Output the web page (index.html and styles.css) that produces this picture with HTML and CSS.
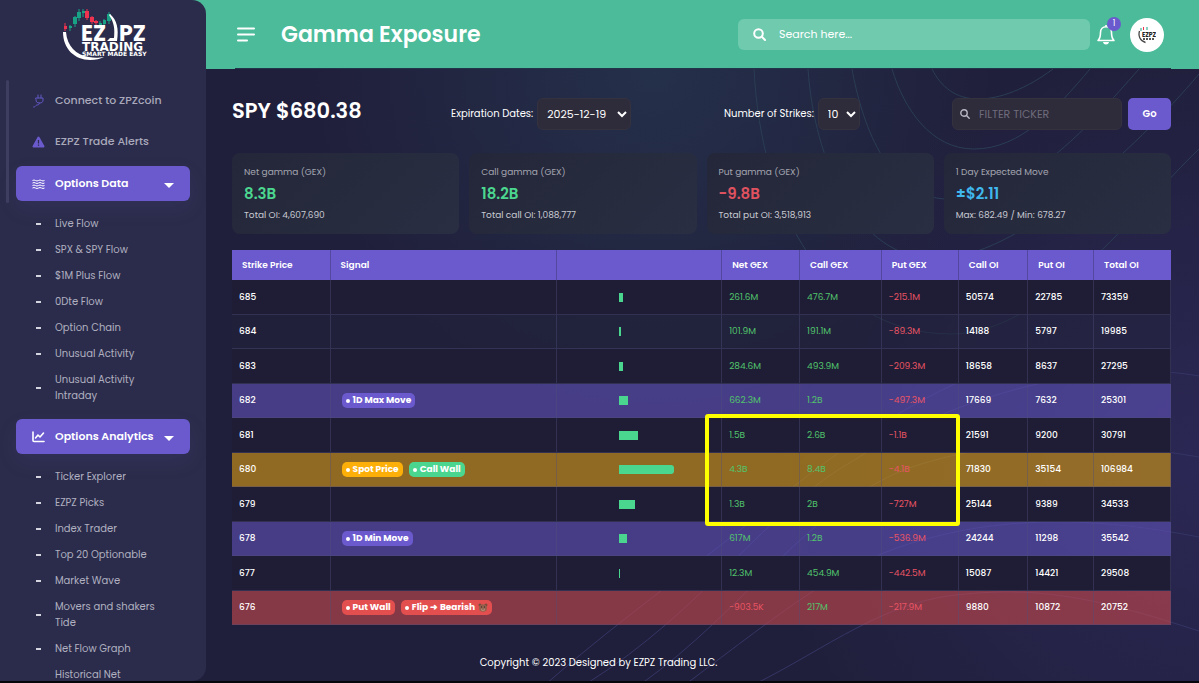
FILE: index.html
```html
<!DOCTYPE html>
<html lang="en">
<head>
    <meta charset="UTF-8">
    <meta name="viewport" content="width=device-width, initial-scale=1.0">
    <title>Gamma Exposure</title>
    <link rel="stylesheet" href="styles.css">
</head>
<body>
    <div class="app">
        <!-- Sidebar -->
        <aside class="sidebar">
            <a href="#" class="logo">
                <svg width="90" height="56" viewBox="0 0 90 56">
                    <g stroke="#19a186" fill="#19a186">
                        <path d="M9 19v6M14 10v11M18 3v12M22 3v8M39 15v7M43 13v7M48 6v12"/>
                        <path stroke="none" d="M8 20h3v2h-3zM12 11h4v7h-4zM16 6h4v6h-4zM21 5h3v2h-3zM38 17h3v2h-3zM42 14h3v4h-3zM46 8h4v7h-4z"/>
                    </g>
                    <g stroke="#ee3350" fill="#ee3350">
                        <path d="M4 17v8M26 3v11M31 10v8M35 14v5"/>
                        <path stroke="none" d="M3 20h3v3h-3zM24 5h4v7h-4zM29 11h4v5h-4zM33 15h4v2h-4z"/>
                    </g>
                    <path fill="#fff" d="M2 26C2 43 14 54 29 54c6 0 10-1 14-3-6 1-10 1-15 0C15 49 6 40 5 26zM49 8c7 6 9 15 7 27h-10l3-3h4c1-9 0-16-5-23z"/>
                    <g fill="#fff">
                        <text x="20" y="35" font-size="22" class="logo-name">EZ</text>
                        <text x="58" y="35" font-size="22" class="logo-name">PZ</text>
                        <text x="21" y="45" font-size="12" class="logo-sub">TRADING</text>
                        <text x="21" y="50" font-size="6" class="logo-sub">SMART MADE EASY</text>
                    </g>
                </svg>
            </a>
            <nav class="menu">
                <a href="#" class="menu-link">
                    <svg width="13" height="14" viewBox="0 0 13 14" fill="none" stroke="#6258c4" stroke-linecap="round"><path d="M6 1v3M9 1v3M4 4h7v2c0 2-1 3-3.500 3S4 8 4 6zM7.500 9c0 3-3 1-4 3-.5 1-1.500 1-2 1"/></svg>
                    Connect to ZPZcoin
                </a>
                <a href="#" class="menu-link">
                    <svg width="13" height="12" viewBox="0 0 13 12"><path fill="#6a5acd" d="M6.500.5c.4 0 .7.2.9.6l5 9c.3.600-.1 1.400-.9 1.400h-10c-.8 0-1.200-.8-.9-1.400l5-9c.2-.4.5-.6.9-.6z"/><path stroke="#2b2c4b" stroke-width="1.200" d="M6.500 4v3.500M6.500 8.500v1.300"/></svg>
                    EZPZ Trade Alerts
                </a>
                <button type="button" class="menu-button">
                    <svg width="13" height="10" viewBox="0 0 13 10" fill="none" stroke="#fff" stroke-width="1"><path d="M.5 1.500q1.500-1 3 0t3 0 3 0 3 0M.5 4q1.500-1 3 0t3 0 3 0 3 0M.5 6.500q1.500-1 3 0t3 0 3 0 3 0M.5 9q1.500-1 3 0t3 0 3 0 3 0"/></svg>
                    Options Data
                    <span class="caret"></span>
                </button>
                <ul class="submenu">
                    <li><a href="#">Live Flow</a></li>
                    <li><a href="#">SPX &amp; SPY Flow</a></li>
                    <li><a href="#">$1M Plus Flow</a></li>
                    <li><a href="#">0Dte Flow</a></li>
                    <li><a href="#">Option Chain</a></li>
                    <li><a href="#">Unusual Activity</a></li>
                    <li><a href="#">Unusual Activity Intraday</a></li>
                </ul>
                <button type="button" class="menu-button">
                    <svg width="13" height="12" viewBox="0 0 13 12" fill="none" stroke="#fff" stroke-width="1.600" stroke-linecap="round" stroke-linejoin="round"><path d="M1 1v8.500c0 .8.300 1 1 1h10M3.500 7l2.500-3 2 2 3.500-4"/></svg>
                    Options Analytics
                    <span class="caret"></span>
                </button>
                <ul class="submenu">
                    <li><a href="#">Ticker Explorer</a></li>
                    <li><a href="#">EZPZ Picks</a></li>
                    <li><a href="#">Index Trader</a></li>
                    <li><a href="#">Top 20 Optionable</a></li>
                    <li><a href="#">Market Wave</a></li>
                    <li><a href="#">Movers and shakers Tide</a></li>
                    <li><a href="#">Net Flow Graph</a></li>
                    <li class="no-dash"><a href="#">Historical Net</a></li>
                </ul>
            </nav>
            <span class="scroll-thumb"></span>
        </aside>

        <div class="page">
            <!-- Top bar -->
            <header class="topbar">
                <button type="button" class="icon-button" aria-label="Toggle menu">
                    <svg width="18" height="15" viewBox="0 0 18 15" stroke="#fff" stroke-width="2" stroke-linecap="round"><path d="M1 1.500h16M1 7.500h16M1 13.500h9"/></svg>
                </button>
                <h1>Gamma Exposure</h1>
                <label class="search">
                    <svg width="13" height="13" viewBox="0 0 13 13" fill="none" stroke="#fff" stroke-width="2" stroke-linecap="round"><circle cx="5.500" cy="5.500" r="4.300"/><path d="M8.800 8.800L12 12"/></svg>
                    <input type="text" placeholder="Search here..." aria-label="Search here">
                </label>
                <button type="button" class="icon-button bell" aria-label="Notifications">
                    <svg width="20" height="21" viewBox="0 0 20 21" fill="none" stroke="#fff" stroke-width="1.600" stroke-linejoin="round"><path d="M10 1v1.500M2 16.500c2-2 2.500-4 2.500-8C4.500 5 7 2.700 10 2.700s5.500 2.300 5.500 5.800c0 4 .5 6 2.500 8z"/><path fill="#fff" stroke="none" d="M7 18h6c-.3 1.700-1.500 2.500-3 2.500S7.300 19.700 7 18z"/></svg>
                    <span class="badge">1</span>
                </button>
                <a href="#" class="avatar" aria-label="Profile">
                    <svg width="18" height="18" viewBox="0 0 18 18">
                        <path fill="none" stroke="#444" stroke-width="1.300" d="M1.500 5C0 10 2 15 7.500 16.500"/>
                        <path stroke="#19a186" d="M3 2v3M9 1v3"/><path stroke="#ee3350" d="M5.500 1v3"/>
                        <path stroke="#555" stroke-width="2" stroke-dasharray="2 1" d="M5 13h12"/>
                        <text x="4" y="11" font-size="6" fill="#222" class="logo-name">EZPZ</text>
                    </svg>
                </a>
            </header>

            <main class="content">
                <svg class="waves" viewBox="0 0 993 615" preserveAspectRatio="xMaxYMin slice" fill="none">
                    <g stroke="#2a3d53" stroke-width="1">
                        <path d="M726 0C735 18 750 30 772 30S820 20 847 0"/>
                        <path d="M686 0C698 40 725 80 768 80C815 80 850 40 884 0"/>
                        <path d="M646 0C655 50 680 130 742 130C820 130 880 60 933 0"/>
                        <path d="M602 0C608 90 650 190 730 190C810 190 930 80 993 5"/>
                        <path d="M548 0C555 140 620 265 745 265C840 265 930 140 993 80"/>
                    </g>
                    <g stroke="#343565" stroke-width="1">
                        <path d="M340 615C420 545 500 490 560 440S690 340 760 310"/>
                        <path d="M380 615C500 540 560 440 650 390C760 320 900 290 993 307"/>
                        <path d="M435 615C540 540 600 440 700 400C800 365 900 372 993 388"/>
                        <path d="M480 615C580 540 640 490 720 470C810 445 900 450 993 468"/>
                        <path d="M549 615C620 580 680 530 760 525C840 517 900 532 993 562"/>
                    </g>
                </svg>

                <!-- Filters -->
                <form class="filters">
                    <h2>SPY $680.38</h2>
                    <div class="field">
                        <label for="expiration">Expiration Dates:</label>
                        <select id="expiration" class="select-date"><option>2025-12-19</option></select>
                    </div>
                    <div class="field">
                        <label for="strikes">Number of Strikes:</label>
                        <select id="strikes" class="select-count"><option>10</option></select>
                    </div>
                    <div class="ticker">
                        <label class="ticker-box">
                            <svg width="10" height="10" viewBox="0 0 10 10" fill="none" stroke="#b9b8c4" stroke-width="1.400" stroke-linecap="round"><circle cx="4" cy="4" r="3.200"/><path d="M6.500 6.500L9.200 9.200"/></svg>
                            <input type="text" placeholder="FILTER TICKER" aria-label="Filter ticker">
                        </label>
                        <button type="button" class="go">Go</button>
                    </div>
                </form>

                <!-- Summary cards -->
                <section class="cards">
                    <div class="card">
                        <span class="card-label">Net gamma (GEX)</span>
                        <strong class="green">8.3B</strong>
                        <span>Total OI: 4,607,690</span>
                    </div>
                    <div class="card">
                        <span class="card-label">Call gamma (GEX)</span>
                        <strong class="green">18.2B</strong>
                        <span>Total call OI: 1,088,777</span>
                    </div>
                    <div class="card">
                        <span class="card-label">Put gamma (GEX)</span>
                        <strong class="red">-9.8B</strong>
                        <span>Total put OI: 3,518,913</span>
                    </div>
                    <div class="card">
                        <span class="card-label">1 Day Expected Move</span>
                        <strong class="blue">±$2.11</strong>
                        <span>Max: 682.49 / Min: 678.27</span>
                    </div>
                </section>

                <!-- Strikes table -->
                <div class="table-wrap">
                    <table class="gex">
                        <colgroup>
                            <col class="col-strike"><col class="col-signal"><col class="col-bar">
                            <col class="col-net"><col class="col-call"><col class="col-put">
                            <col class="col-call-oi"><col class="col-put-oi"><col class="col-total">
                        </colgroup>
                        <thead>
                            <tr><th>Strike Price</th><th>Signal</th><th></th><th>Net GEX</th><th>Call GEX</th><th>Put GEX</th><th>Call OI</th><th>Put OI</th><th>Total OI</th></tr>
                        </thead>
                        <tbody>
                            <tr>
                                <td>685</td><td></td><td><div class="bar" style="width: 4px"></div></td>
                                <td class="up">261.6M</td><td class="up">476.7M</td><td class="down">-215.1M</td>
                                <td>50574</td><td>22785</td><td>73359</td>
                            </tr>
                            <tr>
                                <td>684</td><td></td><td><div class="bar" style="width: 2px"></div></td>
                                <td class="up">101.9M</td><td class="up">191.1M</td><td class="down">-89.3M</td>
                                <td>14188</td><td>5797</td><td>19985</td>
                            </tr>
                            <tr>
                                <td>683</td><td></td><td><div class="bar" style="width: 4px"></div></td>
                                <td class="up">284.6M</td><td class="up">493.9M</td><td class="down">-209.3M</td>
                                <td>18658</td><td>8637</td><td>27295</td>
                            </tr>
                            <tr class="row-move">
                                <td>682</td><td><span class="tag tag-purple">1D Max Move</span></td><td><div class="bar" style="width: 9px"></div></td>
                                <td class="up">662.3M</td><td class="up">1.2B</td><td class="down">-497.3M</td>
                                <td>17669</td><td>7632</td><td>25301</td>
                            </tr>
                            <tr>
                                <td>681</td><td></td><td><div class="bar" style="width: 19px"></div></td>
                                <td class="up">1.5B</td><td class="up">2.6B</td><td class="down">-1.1B</td>
                                <td>21591</td><td>9200</td><td>30791</td>
                            </tr>
                            <tr class="row-spot">
                                <td>680</td><td><span class="tag tag-gold">Spot Price</span><span class="tag tag-green">Call Wall</span></td><td><div class="bar bar-max" style="width: 55px"></div></td>
                                <td class="up">4.3B</td><td class="up">8.4B</td><td class="down">-4.1B</td>
                                <td>71830</td><td>35154</td><td>106984</td>
                            </tr>
                            <tr>
                                <td>679</td><td></td><td><div class="bar" style="width: 16px"></div></td>
                                <td class="up">1.3B</td><td class="up">2B</td><td class="down">-727M</td>
                                <td>25144</td><td>9389</td><td>34533</td>
                            </tr>
                            <tr class="row-move">
                                <td>678</td><td><span class="tag tag-purple">1D Min Move</span></td><td><div class="bar" style="width: 8px"></div></td>
                                <td class="up">617M</td><td class="up">1.2B</td><td class="down">-536.9M</td>
                                <td>24244</td><td>11298</td><td>35542</td>
                            </tr>
                            <tr>
                                <td>677</td><td></td><td><div class="bar" style="width: 1px"></div></td>
                                <td class="up">12.3M</td><td class="up">454.9M</td><td class="down">-442.5M</td>
                                <td>15087</td><td>14421</td><td>29508</td>
                            </tr>
                            <tr class="row-put">
                                <td>676</td>
                                <td><span class="tag tag-red">Put Wall</span><span class="tag tag-red">Flip ➜ Bearish
                                    <svg width="10" height="9" viewBox="0 0 10 9"><circle cx="2" cy="2" r="1.500" fill="#7a4a3c"/><circle cx="8" cy="2" r="1.500" fill="#7a4a3c"/><ellipse cx="5" cy="5" rx="4" ry="3.800" fill="#94604c"/><ellipse cx="5" cy="6.500" rx="2" ry="1.600" fill="#b98a72"/><path d="M3 4h1M6 4h1M4.500 6h1" stroke="#33232a"/></svg></span></td>
                                <td></td>
                                <td class="down">-903.5K</td><td class="up">217M</td><td class="down">-217.9M</td>
                                <td>9880</td><td>10872</td><td>20752</td>
                            </tr>
                        </tbody>
                    </table>
                    <div class="highlight"></div>
                </div>

                <footer>Copyright © 2023 Designed by EZPZ Trading LLC.</footer>
            </main>
        </div>
    </div>
</body>
</html>
```
FILE: styles.css
```css
* {
    box-sizing: border-box;
}
body {
    margin: 0;
    background: #05050c;
    color: #fff;
    font-family: Poppins, Inter, "Open Sans", sans-serif;
    font-size: 10px;
}
button, input, select {
    font-family: inherit;
    color: #fff;
    border: none;
}
a {
    color: inherit;
    text-decoration: none;
}
svg {
    flex-shrink: 0;
}
.app {
    display: flex;
    height: 100vh;
    overflow: hidden;
    border-bottom: 2px solid #05050c;
    background: #201f3b;
}

/* Sidebar */
.sidebar {
    position: relative;
    z-index: 2;
    flex: 0 0 206px;
    padding: 6px 16px 0;
    overflow: hidden;
    background: #2b2c4b;
    border-radius: 0 14px 14px 0;
}
.logo {
    display: block;
    height: 74px;
    padding-left: 45px;
}
.logo-name {
    font-weight: 700;
}
.logo-sub {
    font-family: "DejaVu Sans", sans-serif;
    font-weight: 700;
}
.scroll-thumb {
    position: absolute;
    top: 80px;
    left: 6px;
    width: 3px;
    height: 123px;
    border-radius: 2px;
    background: #3e3f60;
}
.menu-link, .menu-button {
    display: flex;
    align-items: center;
    gap: 10px;
    padding: 0 16px;
    font-size: 11px;
    font-weight: 500;
}
.menu-link {
    height: 41px;
    color: #a9a9bb;
}
.menu-link:nth-child(2) {
    margin-bottom: 4px;
}
.menu-button {
    width: 100%;
    height: 35px;
    border-radius: 6px;
    background: #6a5acd;
    font-weight: 600;
    box-shadow: 0 8px 20px rgba(106, 90, 205, 0.1);
}
.caret {
    margin-left: auto;
    margin-top: 4px;
    border: 5px solid transparent;
    border-top: 5px solid #fff;
    border-bottom: 0;
}
.submenu {
    margin: 0 0 10px;
    padding: 10px 0 0;
    list-style: none;
}
.submenu li {
    display: flex;
    align-items: center;
    gap: 14px;
    padding: 5px 20px;
    color: #b0b0c0;
    line-height: 16px;
}
.submenu li::before {
    content: "";
    flex: 0 0 5px;
    height: 2px;
    background: #d5d5e0;
}
.submenu .no-dash::before {
    background: none;
}

/* Top bar */
.page {
    flex: 1;
    min-width: 0;
    display: flex;
    flex-direction: column;
}
.topbar {
    position: relative;
    display: flex;
    align-items: center;
    flex-shrink: 0;
    height: 69px;
    margin-left: -20px;
    padding: 0 35px 0 51px;
    background: #4bbb99;
}
.topbar::after {
    content: "";
    position: absolute;
    left: 49px;
    right: 28px;
    bottom: 0;
    height: 1px;
    background: #22344a;
}
.topbar h1 {
    margin: 0 auto 0 26px;
    font-size: 22px;
    font-weight: 600;
}
.icon-button {
    padding: 0;
    background: none;
    line-height: 0;
}
.search {
    display: flex;
    align-items: center;
    flex: 0 1 352px;
    height: 31px;
    padding: 0 15px;
    gap: 13px;
    border-radius: 6px;
    background: #70caae;
}
.search input {
    flex: 1;
    min-width: 0;
    padding: 0;
    background: none;
    font-size: 11px;
}
.search input::placeholder {
    color: #fff;
}
.bell {
    position: relative;
    margin: 0 14px 0 6px;
}
.badge {
    position: absolute;
    top: -7px;
    right: -5px;
    width: 14px;
    height: 14px;
    border-radius: 50%;
    background: #6a5acd;
    font-size: 8px;
    line-height: 14px;
}
.avatar {
    display: flex;
    align-items: center;
    justify-content: center;
    flex: 0 0 34px;
    height: 34px;
    border-radius: 50%;
    background: #fff;
}

/* Content */
.content {
    position: relative;
    flex: 1;
    padding: 29px 28px 0 26px;
    background:
        radial-gradient(circle at 45% 0, rgba(42, 68, 92, 0.45), rgba(42, 68, 92, 0) 42%),
        radial-gradient(circle at 100% 65%, rgba(48, 43, 96, 0.7), rgba(48, 43, 96, 0) 40%),
        #201f3b;
}
.waves {
    position: absolute;
    top: 0;
    left: 0;
    width: 100%;
    height: 100%;
}
.filters, .cards, .table-wrap, footer {
    position: relative;
}
.filters {
    display: grid;
    grid-template-columns: 219fr 273fr 228fr 219fr;
    align-items: center;
}
.filters h2 {
    margin: 0 0 6px;
    font-size: 21px;
    line-height: 26px;
    font-weight: 600;
}
.field {
    display: flex;
    align-items: center;
    gap: 4px;
    white-space: nowrap;
}
.field select, .ticker-box {
    height: 32px;
    border: 1px solid #35323f;
    border-radius: 6px;
    background: #2e2b3b;
}
.field select {
    padding-left: 5px;
    font-size: 11px;
}
.select-date {
    width: 94px;
}
.select-count {
    width: 42px;
}
.ticker {
    display: flex;
    gap: 6px;
}
.ticker-box {
    flex: 1;
    display: flex;
    align-items: center;
    gap: 9px;
    padding: 0 7px;
}
.ticker-box input {
    width: 100%;
    min-width: 0;
    padding: 0;
    background: none;
    font-size: 11px;
}
.ticker-box input::placeholder {
    color: #6e6c7b;
}
.go {
    width: 43px;
    border-radius: 5px;
    background: #6a5acd;
    font-size: 10px;
    font-weight: 600;
}
.cards {
    display: grid;
    grid-template-columns: repeat(4, 1fr);
    gap: 10px;
    margin-top: 23px;
}
.card {
    display: flex;
    flex-direction: column;
    padding: 11px 12px;
    border-radius: 8px;
    background: linear-gradient(135deg, #242739, #292e42);
    color: #c8c9d2;
    font-size: 9px;
    line-height: 16px;
}
.card-label {
    color: #a4a5b1;
}
.card strong {
    font-size: 15px;
    line-height: 27px;
    font-weight: 600;
}
.green {
    color: #4cd790;
}
.red {
    color: #e05260;
}
.blue {
    color: #40b8ee;
}

/* Table */
.table-wrap {
    margin-top: 16px;
}
.gex {
    width: 100%;
    table-layout: fixed;
    border-collapse: separate;
    border-spacing: 0;
    font-size: 9px;
    font-weight: 500;
}
.col-strike { width: 10.5%; }
.col-signal { width: 24.1%; }
.col-bar { width: 17.6%; }
.col-net { width: 8.3%; }
.col-call { width: 8.7%; }
.col-put { width: 8.2%; }
.col-call-oi { width: 7.4%; }
.col-put-oi { width: 7%; }
.col-total { width: 8.2%; }
.gex th {
    height: 30px;
    padding: 0 10px;
    background: #6a5acd;
    border-right: 1px solid #5348a0;
    font-weight: 600;
    text-align: left;
}
.gex td {
    height: 35px;
    padding: 0 0 0 7px;
    border-right: 1px solid rgba(80, 80, 125, 0.4);
    border-bottom: 1px solid rgba(80, 80, 125, 0.4);
}
.gex tr:nth-child(even) td {
    height: 34px;
}
.gex th:last-child {
    border-right: none;
}
.gex td:nth-child(2) {
    padding-left: 11px;
}
.gex tbody tr {
    background: rgba(33, 33, 58, 0.5);
}
.gex tbody tr:nth-child(odd) {
    background: #1e1d35;
}
.gex tbody .row-move {
    background: rgba(93, 81, 181, 0.62);
}
.gex tbody .row-spot {
    background: rgba(202, 146, 22, 0.66);
}
.gex tbody .row-put {
    background: rgba(202, 74, 76, 0.6);
}
.gex .up {
    color: #52c46c;
    font-weight: 400;
}
.gex .down {
    color: #e95464;
    font-weight: 400;
}
.bar {
    height: 9px;
    margin-left: 35%;
    background: #4bd68f;
}
.bar-max {
    border-radius: 0 3px 3px 0;
}
.tag {
    display: inline-flex;
    align-items: center;
    gap: 3px;
    height: 15px;
    margin-right: 6px;
    padding: 0 4px;
    border-radius: 5px;
    font-weight: 700;
}
.tag::before {
    content: "";
    width: 4px;
    height: 4px;
    border-radius: 50%;
    background: #fff;
}
.tag-purple { background: #6a5acd; }
.tag-gold { background: #fcae09; }
.tag-green { background: #4bd68f; }
.tag-red { background: #e34f4f; }
.highlight {
    position: absolute;
    top: 164px;
    left: 50.4%;
    width: 27.1%;
    height: 112px;
    border: 4px solid #ffff00;
    border-radius: 3px;
}
/* centred on the window, so it reaches back under the sidebar */
footer {
    margin-left: -206px;
    padding: 30px 0 10px;
    line-height: 16px;
    text-align: center;
}
```
